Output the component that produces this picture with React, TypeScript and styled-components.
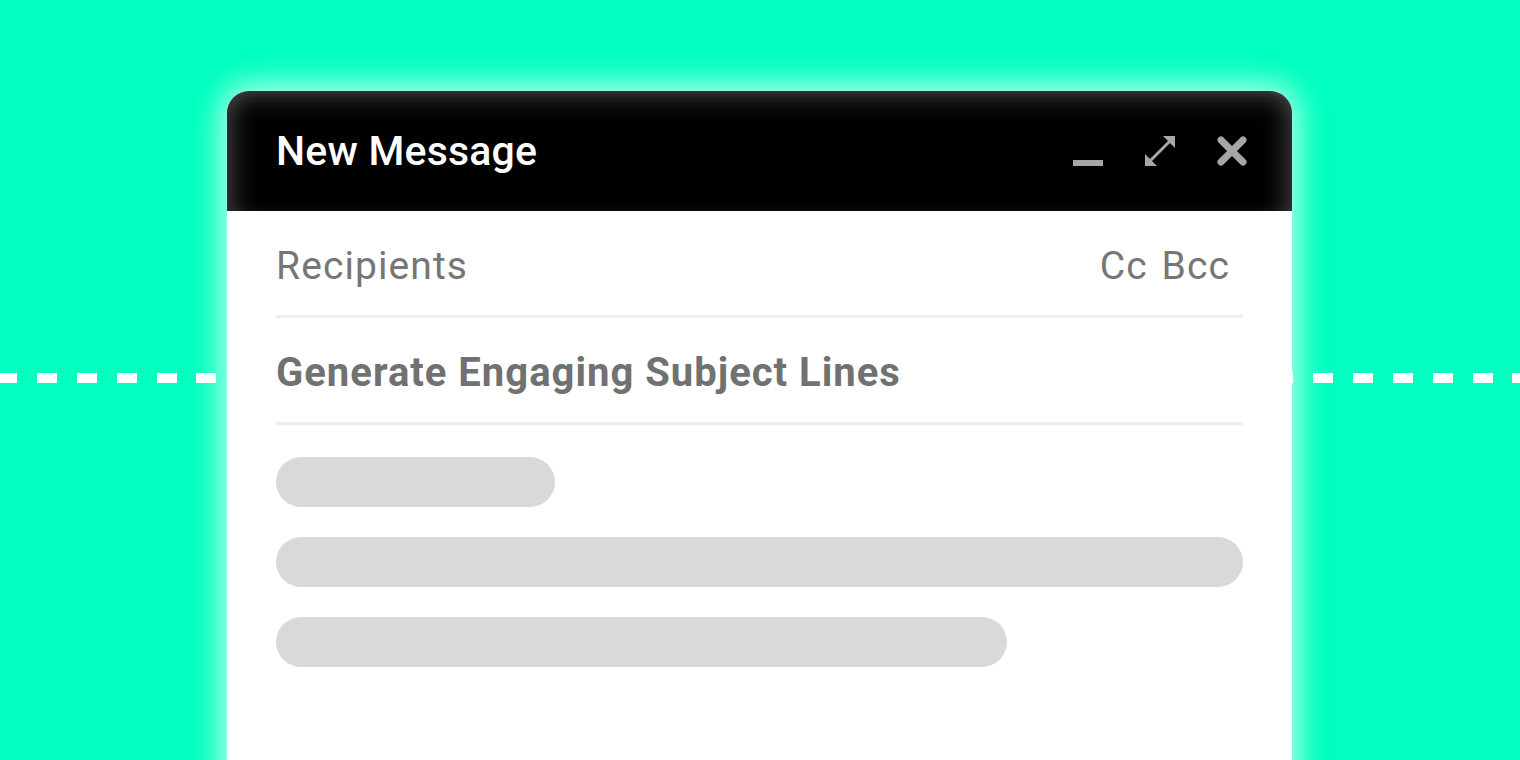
import styled, { createGlobalStyle } from 'styled-components';

const GlobalStyle = createGlobalStyle`
	html, body {
		margin: 0;
		padding: 0;
		width: 1520px;
		height: 760px;
		overflow: hidden;
		font-family: Roboto, "Liberation Sans", sans-serif;
	}
`

const Page = styled.div`
	width: 1520px;
	height: 760px;
	display: flex;
	align-items: flex-start;
	padding: 91px 0 0 227px;
	box-sizing: border-box;
	background-color: #01ffbf;
	background-image: repeating-linear-gradient(90deg, #ffffff 0 20px, transparent 20px 39.88px);
	background-size: calc(100% + 40px) 10px;
	background-position: -3px 373px;
	background-repeat: no-repeat;
	overflow: hidden;
`

const Card = styled.div`
	width: 1065px;
	height: 720px;
	flex-shrink: 0;
	display: flex;
	flex-direction: column;
	background: #ffffff;
	border-radius: 22px 22px 0 0;
	box-shadow: 0 0 30px 6px rgba(255, 255, 255, 0.75);
	overflow: hidden;
`

const Header = styled.div`
	height: 120px;
	display: flex;
	align-items: center;
	justify-content: space-between;
	padding: 0 45px 0 49px;
	background: #000000;
	box-shadow:
		inset 22px 0 26px -16px rgba(255, 255, 255, 0.24),
		inset -22px 0 26px -16px rgba(255, 255, 255, 0.24),
		inset 0 22px 26px -16px rgba(255, 255, 255, 0.24);
	flex-shrink: 0;
`

const Title = styled.div`
	color: #ffffff;
	font-size: 41px;
	font-weight: 500;
	letter-spacing: 0.2px;
`

const Controls = styled.div`
	display: flex;
	align-items: center;
	gap: 42px;
`

const IconButton = styled.div`
	width: 30px;
	height: 30px;
	display: flex;
	color: #a6a6a6;
	svg {
		width: 30px;
		height: 30px;
	}
`

const Body = styled.div`
	display: flex;
	flex-direction: column;
	padding: 0 49px;
`

const Field = styled.div<{ $height: number; $offset: number }>`
	height: ${({ $height }) => $height}px;
	display: flex;
	align-items: center;
	justify-content: space-between;
	padding-top: ${({ $offset }) => $offset}px;
	box-sizing: border-box;
	border-bottom: 3px solid #eeeeee;
`

const Label = styled.span`
	font-size: 39px;
	font-weight: 400;
	letter-spacing: 1.1px;
	color: #767676;
`

const Extras = styled(Label)`
	padding-right: 13px;
	word-spacing: 3px;
`

const Subject = styled.span`
	font-size: 40px;
	font-weight: 700;
	letter-spacing: 1px;
	color: #717171;
`

const Skeletons = styled.div`
	display: flex;
	flex-direction: column;
	gap: 30px;
	padding-top: 32px;
`

const Bar = styled.div<{ $width: number }>`
	width: ${({ $width }) => $width}px;
	height: 50px;
	border-radius: 25px;
	background: #d9d9d9;
`

const MinimizeIcon = () => (
	<svg viewBox="0 0 30 30" fill="currentColor">
		<rect x="0" y="24" width="30" height="6" />
	</svg>
)

const ExpandIcon = () => (
	<svg viewBox="0 0 30 30" fill="currentColor">
		<polygon points="30,0 30,12 18,0" />
		<polygon points="0,30 0,18 12,30" />
		<line x1="5" y1="25" x2="25" y2="5" stroke="currentColor" strokeWidth="3" />
	</svg>
)

const CloseIcon = () => (
	<svg viewBox="0 0 30 30" fill="none" stroke="currentColor" strokeWidth="7" strokeLinecap="round">
		<line x1="4" y1="4" x2="26" y2="26" />
		<line x1="26" y1="4" x2="4" y2="26" />
	</svg>
)

const App = () => {
	return (
		<>
			<GlobalStyle />
			<Page>
				<Card>
					<Header>
						<Title>New Message</Title>
						<Controls>
							<IconButton><MinimizeIcon /></IconButton>
							<IconButton><ExpandIcon /></IconButton>
							<IconButton><CloseIcon /></IconButton>
						</Controls>
					</Header>
					<Body>
						<Field $height={107} $offset={6}>
							<Label>Recipients</Label>
							<Extras>Cc Bcc</Extras>
						</Field>
						<Field $height={107} $offset={5}>
							<Subject>Generate Engaging Subject Lines</Subject>
						</Field>
						<Skeletons>
							<Bar $width={279} />
							<Bar $width={967} />
							<Bar $width={731} />
						</Skeletons>
					</Body>
				</Card>
			</Page>
		</>
	);
}

export default App;
